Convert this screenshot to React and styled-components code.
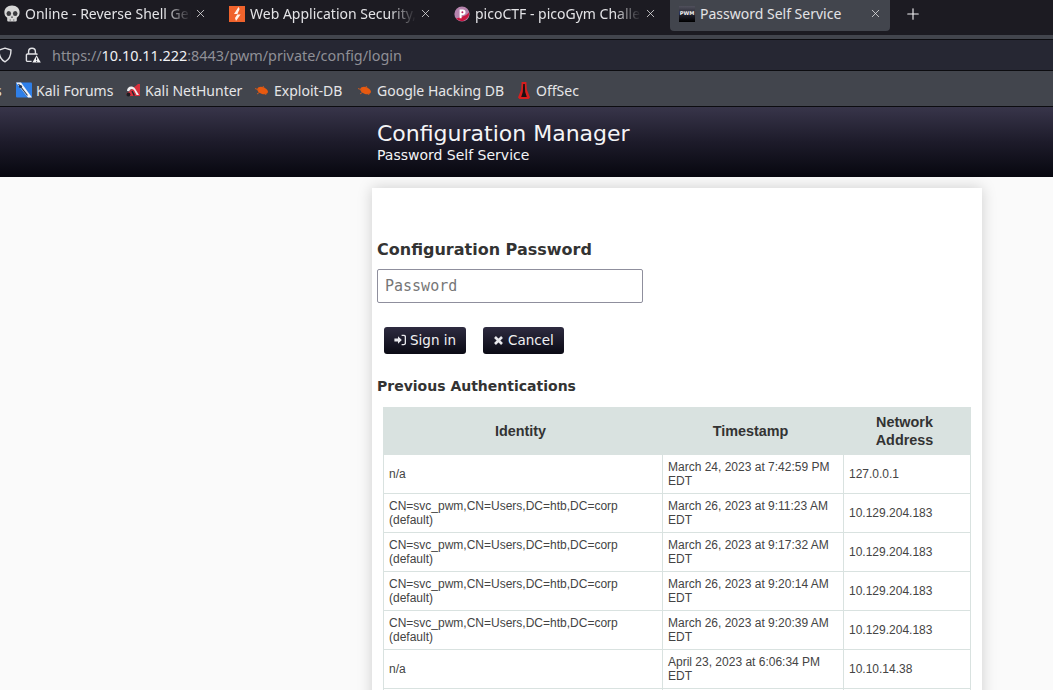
import React from 'react'
import styled, { createGlobalStyle } from 'styled-components'
import { X, Plus } from 'lucide-react'

const GlobalStyle = createGlobalStyle`
    html, body {
        margin: 0;
        padding: 0;
        height: 690px;
        overflow: hidden;
        background: #fafafa;
    }
`

const Screen = styled.div`
    width: 1053px;
    height: 690px;
    overflow: hidden;
    display: flex;
    flex-direction: column;
`

const TabBar = styled.div`
    height: 35px;
    flex: none;
    background: #1c1b22;
    border-bottom: 4px solid #42454d;
    display: flex;
    align-items: flex-start;
    gap: 5px;
    margin-left: -5px;
    width: 1058px;
    font-family: 'Noto Sans', sans-serif;
`

const TabItem = styled.div`
    width: 220px;
    height: 31px;
    flex: none;
    box-sizing: border-box;
    display: flex;
    align-items: center;
    padding: 0 8px 4px;
    border-radius: 0 0 4px 4px;
    background: ${props => (props.active ? '#42454d' : 'transparent')};
`

const TabIcon = styled.span`
    width: 18px;
    height: 18px;
    flex: none;
    display: flex;
    align-items: center;
    justify-content: center;
    margin-right: 4px;
`

const TabTitle = styled.span`
    flex: 1;
    min-width: 0;
    overflow: hidden;
    white-space: nowrap;
    font-size: 14px;
    line-height: 27px;
    color: #e3e3e6;
    ${props =>
        props.faded &&
        `-webkit-mask-image: linear-gradient(to right, #000 84%, transparent 100%);
         mask-image: linear-gradient(to right, #000 84%, transparent 100%);`}
`

const TabClose = styled.span`
    width: 14px;
    height: 14px;
    flex: none;
    margin-left: 2px;
    display: flex;
    align-items: center;
    justify-content: center;
    color: #e8e8ea;
`

const NewTab = styled.span`
    height: 27px;
    display: flex;
    align-items: center;
    margin-left: 9px;
    color: #f2f2f4;
`

const AddressBar = styled.div`
    height: 32px;
    flex: none;
    box-sizing: border-box;
    background: #262733;
    border-top: 1px solid #0c0c10;
    border-bottom: 1px solid #0c0c10;
    display: flex;
    align-items: center;
    margin-left: -3px;
    font-family: 'Noto Sans', sans-serif;
`

const ToolbarIcon = styled.svg`
    flex: none;
    margin-right: ${props => props.gap}px;
`

const Url = styled.div`
    font-size: 14.4px;
    color: #8f8f96;
    white-space: nowrap;
`

const UrlHost = styled.span`
    color: #f1f1f3;
`

const BookmarkBar = styled.div`
    height: 36px;
    flex: none;
    box-sizing: border-box;
    background: #42454d;
    border-bottom: 1px solid #0c0c10;
    padding-top: 3px;
    display: flex;
    align-items: center;
    font-family: 'Noto Sans', sans-serif;
    font-size: 14px;
    color: #e6e6e8;
    white-space: nowrap;
`

const Bookmark = styled.div`
    width: ${props => props.width}px;
    flex: none;
    display: flex;
    align-items: center;
    gap: 4px;
`

const BookmarkStub = styled.span`
    width: 16px;
    flex: none;
    overflow: hidden;
    text-indent: -5px;
`

const PageHeader = styled.div`
    height: 70px;
    flex: none;
    box-sizing: border-box;
    background: linear-gradient(to bottom, #38354a 0%, #1d1b2a 50%, #07070f 100%);
    padding: 14px 0 0 377px;
    font-family: 'DejaVu Sans', sans-serif;
    color: #f4f4f6;
`

const HeaderTitle = styled.div`
    font-size: 22px;
    line-height: 26px;
`

const HeaderSub = styled.div`
    font-size: 14px;
    line-height: 16px;
`

const PageBody = styled.div`
    flex: 1;
    min-height: 0;
    background: #fafafa;
    padding: 11px 0 0 372px;
`

const Card = styled.div`
    width: 610px;
    box-sizing: border-box;
    background: #ffffff;
    box-shadow: 0 0 14px rgba(0, 0, 0, 0.18);
    padding: 53px 5px 0;
    font-family: 'DejaVu Sans', sans-serif;
    color: #333333;
    min-height: 600px;
`

const FormTitle = styled.div`
    font-size: 16px;
    font-weight: bold;
    line-height: 18px;
    margin-bottom: 10px;
`

const PasswordInput = styled.input`
    display: block;
    width: 266px;
    height: 34px;
    box-sizing: border-box;
    border: 1px solid #8f8f9d;
    border-radius: 2px;
    padding: 0 7px;
    font-family: 'DejaVu Sans Mono', monospace;
    font-size: 15px;
    background: #ffffff;
    &::placeholder {
        color: #767676;
        opacity: 1;
    }
`

const ButtonRow = styled.div`
    display: flex;
    gap: 17px;
    margin: 24px 0 0 7px;
`

const Button = styled.div`
    height: 27px;
    box-sizing: border-box;
    padding: 0 10px 2px;
    display: flex;
    align-items: center;
    gap: 4px;
    border-radius: 3px;
    background: linear-gradient(to bottom, #2e2b40 0%, #0a0a14 100%);
    color: #f0f0f2;
    font-size: 13.5px;
`

const SectionTitle = styled.div`
    font-size: 14px;
    font-weight: bold;
    line-height: 16px;
    margin-top: 24px;
    margin-bottom: 13px;
`

const AuthTable = styled.table`
    width: 587px;
    margin-left: 6px;
    border-collapse: collapse;
    table-layout: fixed;
    font-family: 'Liberation Sans', sans-serif;
`

const HeadCell = styled.th`
    background: #d9e2e0;
    border: 1px solid #d9e2e0;
    color: #333333;
    font-size: 14.4px;
    font-weight: bold;
    line-height: 18px;
    padding: 5px 10px 5px 5px;
    text-align: center;
`

const Cell = styled.td`
    border: 1px solid #d9e2e0;
    color: #444444;
    font-size: 12px;
    line-height: 14px;
    padding: 5px;
    vertical-align: middle;
`

const Skull = () => (
    <svg width="18" height="18" viewBox="0 0 18 18">
        <path d="M9 0.6C4.2 0.6 1.4 3.8 1.4 7.6c0 2.5 1.1 4.2 2.8 5.2v2.4c0 .9.6 1.4 1.3 1.4h7c.7 0 1.3-.5 1.3-1.4v-2.4c1.7-1 2.8-2.7 2.8-5.2C16.6 3.8 13.8.6 9 .6z" fill="#d6d6d6" />
        <ellipse cx="5.8" cy="8.4" rx="2.3" ry="2.5" fill="#3a3a3e" />
        <ellipse cx="12.2" cy="8.4" rx="2.3" ry="2.5" fill="#3a3a3e" />
        <path d="M9 10.8l1 2H8z" fill="#3a3a3e" />
        <path d="M7.2 14v2.4M10.8 14v2.4" stroke="#77777a" strokeWidth="0.8" />
    </svg>
)

const BoltIcon = () => (
    <svg width="16" height="16" viewBox="0 0 16 16">
        <rect width="16" height="16" fill="#f0632c" />
        <path d="M9.5 1L5 8h3.6L6 12l1 3 4.6-6.4H8.2L10.6 3z" fill="#fff3ea" />
    </svg>
)

const PicoIcon = () => (
    <svg width="16" height="16" viewBox="0 0 16 16">
        <circle cx="8" cy="8" r="7.6" fill="#b583ad" />
        <path d="M2 12.6C5 11 11 11 15 6.4A7.6 7.6 0 0 1 2 12.6z" fill="#c9153f" />
        <path d="M5.6 3.6h3.2a2.6 2.6 0 0 1 0 5.4H7.6v3.2h-2z" fill="#fff" />
        <circle cx="8.4" cy="6.3" r="1" fill="#b9225e" />
    </svg>
)

const PwmIcon = () => (
    <svg width="16" height="16" viewBox="0 0 16 16">
        <defs>
            <linearGradient id="pwmFade" x1="0" y1="0" x2="0" y2="1">
                <stop offset="0" stopColor="#50505c" />
                <stop offset="0.55" stopColor="#20202c" />
                <stop offset="1" stopColor="#000000" />
            </linearGradient>
        </defs>
        <rect width="16" height="16" fill="url(#pwmFade)" />
        <text x="8" y="8.6" textAnchor="middle" fontFamily="'DejaVu Sans', sans-serif" fontSize="5.2" fontWeight="bold" fill="#f0f0f0">
            PWM
        </text>
    </svg>
)

const ShieldIcon = () => (
    <ToolbarIcon gap={12} width="16" height="16" viewBox="0 0 16 16" fill="none">
        <path d="M8 1.2l6 1.8c0 5.5-1.6 9.6-6 11.8C3.6 12.6 2 8.5 2 3z" stroke="#e2e2e6" strokeWidth="1.4" strokeLinejoin="round" />
    </ToolbarIcon>
)

const LockWarnIcon = () => (
    <ToolbarIcon gap={11} width="16" height="16" viewBox="0 0 16 16" fill="none">
        <path d="M3.6 7V4.6a3.4 3.4 0 0 1 6.8 0V7" stroke="#e2e2e6" strokeWidth="1.4" />
        <path d="M6.6 14.4H2.6A1.2 1.2 0 0 1 1.4 13.2V8.2A1.2 1.2 0 0 1 2.6 7h8.8a1.2 1.2 0 0 1 1 .6" stroke="#e2e2e6" strokeWidth="1.4" />
        <path d="M11.6 8.2l4.2 7.4H7.4z" fill="#f4f4f6" />
        <path d="M11.6 10.6v2.6M11.6 14v.8" stroke="#262733" strokeWidth="1" />
    </ToolbarIcon>
)

const KaliForumsIcon = () => (
    <svg width="16" height="16" viewBox="0 0 16 16">
        <rect width="16" height="15" y="0.5" rx="1" fill="#2f7fe8" />
        <path d="M0 0.5h5L16 15.5h-4z" fill="#f2f4f8" />
        <path d="M2.5 2l9 11.5" stroke="#2a3a55" strokeWidth="1.2" />
        <circle cx="4.5" cy="4.5" r="1.6" fill="#27334a" />
    </svg>
)

const NetHunterIcon = () => (
    <svg width="16" height="16" viewBox="0 0 16 16">
        <path d="M1 12L13 2h2v12H3z" fill="#d72f3c" />
        <path d="M2 9C2 4.5 7 3 10 6.5L14 13h-2.4L9 8C7 6 4.6 7 4.4 9.2z" fill="#f0f0f2" />
        <circle cx="3.4" cy="12.6" r="2" fill="#1d1d22" />
        <path d="M7 9l2.4 4.6" stroke="#26262c" strokeWidth="1.4" />
    </svg>
)

const ExploitIcon = () => (
    <svg width="16" height="16" viewBox="0 0 16 16">
        <ellipse cx="8.6" cy="8.6" rx="5.6" ry="3.4" fill="#e8590f" transform="rotate(20 8.6 8.6)" />
        <path d="M1 6.5l4 1.5M3 12l3-2M9 4l1 2M12 13l-1-2" stroke="#c9591e" strokeWidth="1" />
    </svg>
)

const OffSecIcon = () => (
    <svg width="16" height="19" viewBox="0 0 16 19">
        <path d="M5.6 1h4.8l.4 7.4 3.2 8-1.4 1.6H3.4L2 16.4l3.2-8z" fill="#d81e1e" />
        <path d="M7.2 3h1.6l.4 8 1.6 5H5.2l1.6-5z" fill="#1c1012" />
    </svg>
)

const SignInIcon = () => (
    <svg width="12" height="12" viewBox="0 0 12 12">
        <path d="M0.4 4.4h3.6V2.2L7.8 6 4 9.8V7.6H0.4z" fill="#e8e8ec" />
        <path d="M7.6 1.4h2.2c.9 0 1.6.7 1.6 1.6v6c0 .9-.7 1.6-1.6 1.6H7.6" fill="none" stroke="#e8e8ec" strokeWidth="1.4" />
    </svg>
)

const CancelIcon = () => (
    <svg width="11" height="11" viewBox="0 0 11 11">
        <path d="M2 3l7 7M9 3l-7 7" stroke="#e8e8ec" strokeWidth="2.6" />
    </svg>
)

const tabs = [
    { title: 'Online - Reverse Shell Generator', icon: <Skull />, faded: true },
    { title: 'Web Application Security, Testing', icon: <BoltIcon />, faded: true },
    { title: 'picoCTF - picoGym Challenges', icon: <PicoIcon />, faded: true },
    { title: 'Password Self Service', icon: <PwmIcon />, active: true }
]

const bookmarks = [
    { label: 'Kali Forums', width: 109, icon: <KaliForumsIcon /> },
    { label: 'Kali NetHunter', width: 129, icon: <NetHunterIcon /> },
    { label: 'Exploit-DB', width: 103, icon: <ExploitIcon /> },
    { label: 'Google Hacking DB', width: 159, icon: <ExploitIcon /> },
    { label: 'OffSec', width: 70, icon: <OffSecIcon /> }
]

const SVC = 'CN=svc_pwm,CN=Users,DC=htb,DC=corp (default)'

const rows = [
    ['n/a', 'March 24, 2023 at 7:42:59 PM EDT', '127.0.0.1'],
    [SVC, 'March 26, 2023 at 9:11:23 AM EDT', '10.129.204.183'],
    [SVC, 'March 26, 2023 at 9:17:32 AM EDT', '10.129.204.183'],
    [SVC, 'March 26, 2023 at 9:20:14 AM EDT', '10.129.204.183'],
    [SVC, 'March 26, 2023 at 9:20:39 AM EDT', '10.129.204.183'],
    ['n/a', 'April 23, 2023 at 6:06:34 PM EDT', '10.10.14.38'],
    ['', '', '']
]

export default function App() {
    return (
        <Screen>
            <GlobalStyle />
            <TabBar>
                {tabs.map(tab => (
                    <TabItem key={tab.title} active={tab.active}>
                        <TabIcon>{tab.icon}</TabIcon>
                        <TabTitle faded={tab.faded}>{tab.title}</TabTitle>
                        <TabClose>
                            <X size={13} strokeWidth={1.4} />
                        </TabClose>
                    </TabItem>
                ))}
                <NewTab>
                    <Plus size={18} strokeWidth={1.5} />
                </NewTab>
            </TabBar>
            <AddressBar>
                <ShieldIcon />
                <LockWarnIcon />
                <Url>
                    https://<UrlHost>10.10.11.222</UrlHost>:8443/pwm/private/config/login
                </Url>
            </AddressBar>
            <BookmarkBar>
                <BookmarkStub>s</BookmarkStub>
                {bookmarks.map(mark => (
                    <Bookmark key={mark.label} width={mark.width}>
                        {mark.icon}
                        {mark.label}
                    </Bookmark>
                ))}
            </BookmarkBar>
            <PageHeader>
                <HeaderTitle>Configuration Manager</HeaderTitle>
                <HeaderSub>Password Self Service</HeaderSub>
            </PageHeader>
            <PageBody>
                <Card>
                    <FormTitle>Configuration Password</FormTitle>
                    <PasswordInput type="password" placeholder="Password" />
                    <ButtonRow>
                        <Button>
                            <SignInIcon />
                            Sign in
                        </Button>
                        <Button>
                            <CancelIcon />
                            Cancel
                        </Button>
                    </ButtonRow>
                    <SectionTitle>Previous Authentications</SectionTitle>
                    <AuthTable>
                        <colgroup>
                            <col width="279" />
                            <col width="181" />
                            <col width="127" />
                        </colgroup>
                        <thead>
                            <tr>
                                <HeadCell>Identity</HeadCell>
                                <HeadCell>Timestamp</HeadCell>
                                <HeadCell>Network Address</HeadCell>
                            </tr>
                        </thead>
                        <tbody>
                            {rows.map((row, i) => (
                                <tr key={i}>
                                    {row.map((value, j) => (
                                        <Cell key={j}>{value}</Cell>
                                    ))}
                                </tr>
                            ))}
                        </tbody>
                    </AuthTable>
                </Card>
            </PageBody>
        </Screen>
    )
}
